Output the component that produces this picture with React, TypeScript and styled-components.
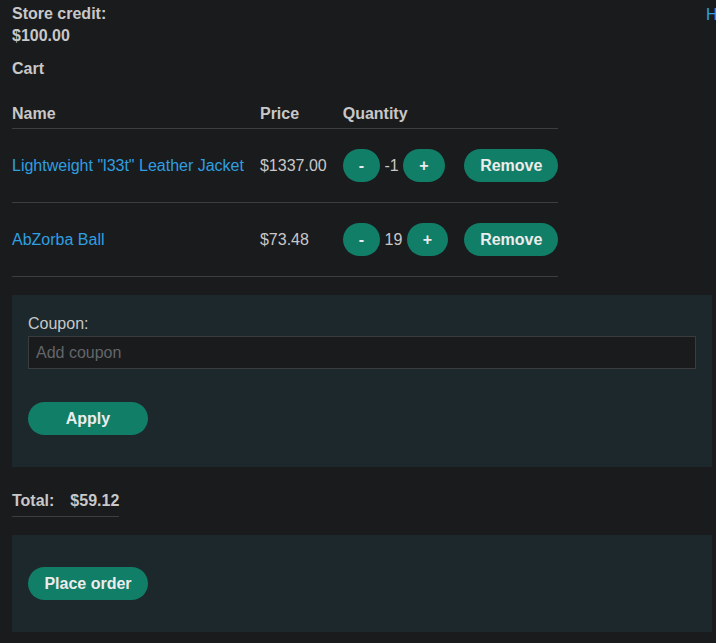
import React from 'react';
import styled, { createGlobalStyle } from 'styled-components';

const GlobalStyle = createGlobalStyle`
  html, body {
    margin: 0;
    padding: 0;
    background: #1a1b1d;
    overflow-x: hidden;
  }
  body {
    font-family: "Liberation Sans", Arial, sans-serif;
    font-size: 16px;
    color: #c8c8c8;
  }
`;

const Page = styled.div`
  padding: 3px 4px 12px 12px;
  position: relative;
`;

const HomeLink = styled.a`
  position: absolute;
  top: 4px;
  left: 706px;
  color: #2f9fe0;
  text-decoration: none;
  white-space: nowrap;
  line-height: 22px;
`;

const Credit = styled.div`
  font-weight: bold;
  line-height: 22px;
`;

const Heading = styled.div`
  font-weight: bold;
  line-height: 22px;
  margin-top: 11px;
`;

const CartTable = styled.table`
  border-collapse: collapse;
  margin-top: 22px;
`;

const Th = styled.th`
  text-align: left;
  font-weight: bold;
  line-height: 22px;
  padding: 1px 16px 3px 0;
  border-bottom: 1px solid #3d3e40;
  &:last-child {
    padding-right: 0;
  }
`;

const Td = styled.td`
  padding: 20px 16px 20px 0;
  line-height: 22px;
  border-bottom: 1px solid #3d3e40;
  white-space: nowrap;
  vertical-align: middle;
  &:last-child {
    padding-right: 0;
  }
`;

const ItemLink = styled.a`
  color: #2f9fe0;
  text-decoration: none;
`;

const Qty = styled.div`
  display: flex;
  align-items: center;
  gap: 4.5px;
`;

const Button = styled.button<{ $wide?: boolean }>`
  height: 33px;
  padding: 0 16px;
  min-width: ${p => (p.$wide ? '120px' : '0')};
  border: none;
  border-radius: 17px;
  background: #117e68;
  color: #ececec;
  font-family: "Liberation Sans", Arial, sans-serif;
  font-size: 16px;
  font-weight: bold;
  cursor: pointer;
`;

const Panel = styled.div`
  background: #1d282d;
  margin-top: 18px;
  padding: 16px 16px 32px;
`;

const Label = styled.label`
  display: block;
  line-height: 23px;
  padding-top: 1px;
  margin-bottom: 1px;
`;

const Input = styled.input`
  display: block;
  box-sizing: border-box;
  width: 100%;
  height: 33px;
  padding: 1px 7px 0;
  background: #1a1b1d;
  border: 1px solid #3a3c3e;
  color: #c8c8c8;
  font-family: "Liberation Sans", Arial, sans-serif;
  font-size: 16px;
  outline: none;
  &::placeholder {
    color: #62666a;
  }
`;

const ApplyRow = styled.div`
  margin-top: 33px;
`;

const OrderPanel = styled.div`
  background: #1d282d;
  margin-top: 18px;
  padding: 32px 16px;
`;

const TotalTable = styled.table`
  border-collapse: collapse;
  margin-top: 23px;
`;

const TotalCell = styled.th`
  text-align: left;
  font-weight: bold;
  line-height: 22px;
  padding: 0 16px 4px 0;
  border-bottom: 1px solid #3d3e40;
  &:last-child {
    padding-right: 0;
  }
`;

const items = [
  { name: 'Lightweight "l33t" Leather Jacket', price: '$1337.00', qty: -1 },
  { name: 'AbZorba Ball', price: '$73.48', qty: 19 },
];

const App: React.FC = () => {
  return (
    <>
      <GlobalStyle />
      <Page>
        <HomeLink href="#">Home</HomeLink>
        <Credit>Store credit:</Credit>
        <Credit>$100.00</Credit>
        <Heading>Cart</Heading>
        <CartTable>
          <thead>
            <tr>
              <Th>Name</Th>
              <Th>Price</Th>
              <Th>Quantity</Th>
              <Th></Th>
            </tr>
          </thead>
          <tbody>
            {items.map(item => (
              <tr key={item.name}>
                <Td>
                  <ItemLink href="#">{item.name}</ItemLink>
                </Td>
                <Td>{item.price}</Td>
                <Td>
                  <Qty>
                    <Button>-</Button>
                    <span>{item.qty}</span>
                    <Button>+</Button>
                  </Qty>
                </Td>
                <Td>
                  <Button>Remove</Button>
                </Td>
              </tr>
            ))}
          </tbody>
        </CartTable>
        <Panel>
          <Label>Coupon:</Label>
          <Input placeholder="Add coupon" />
          <ApplyRow>
            <Button $wide>Apply</Button>
          </ApplyRow>
        </Panel>
        <TotalTable>
          <tbody>
            <tr>
              <TotalCell>Total:</TotalCell>
              <TotalCell>$59.12</TotalCell>
            </tr>
          </tbody>
        </TotalTable>
        <OrderPanel>
          <Button $wide>Place order</Button>
        </OrderPanel>
      </Page>
    </>
  );
};

export default App;
